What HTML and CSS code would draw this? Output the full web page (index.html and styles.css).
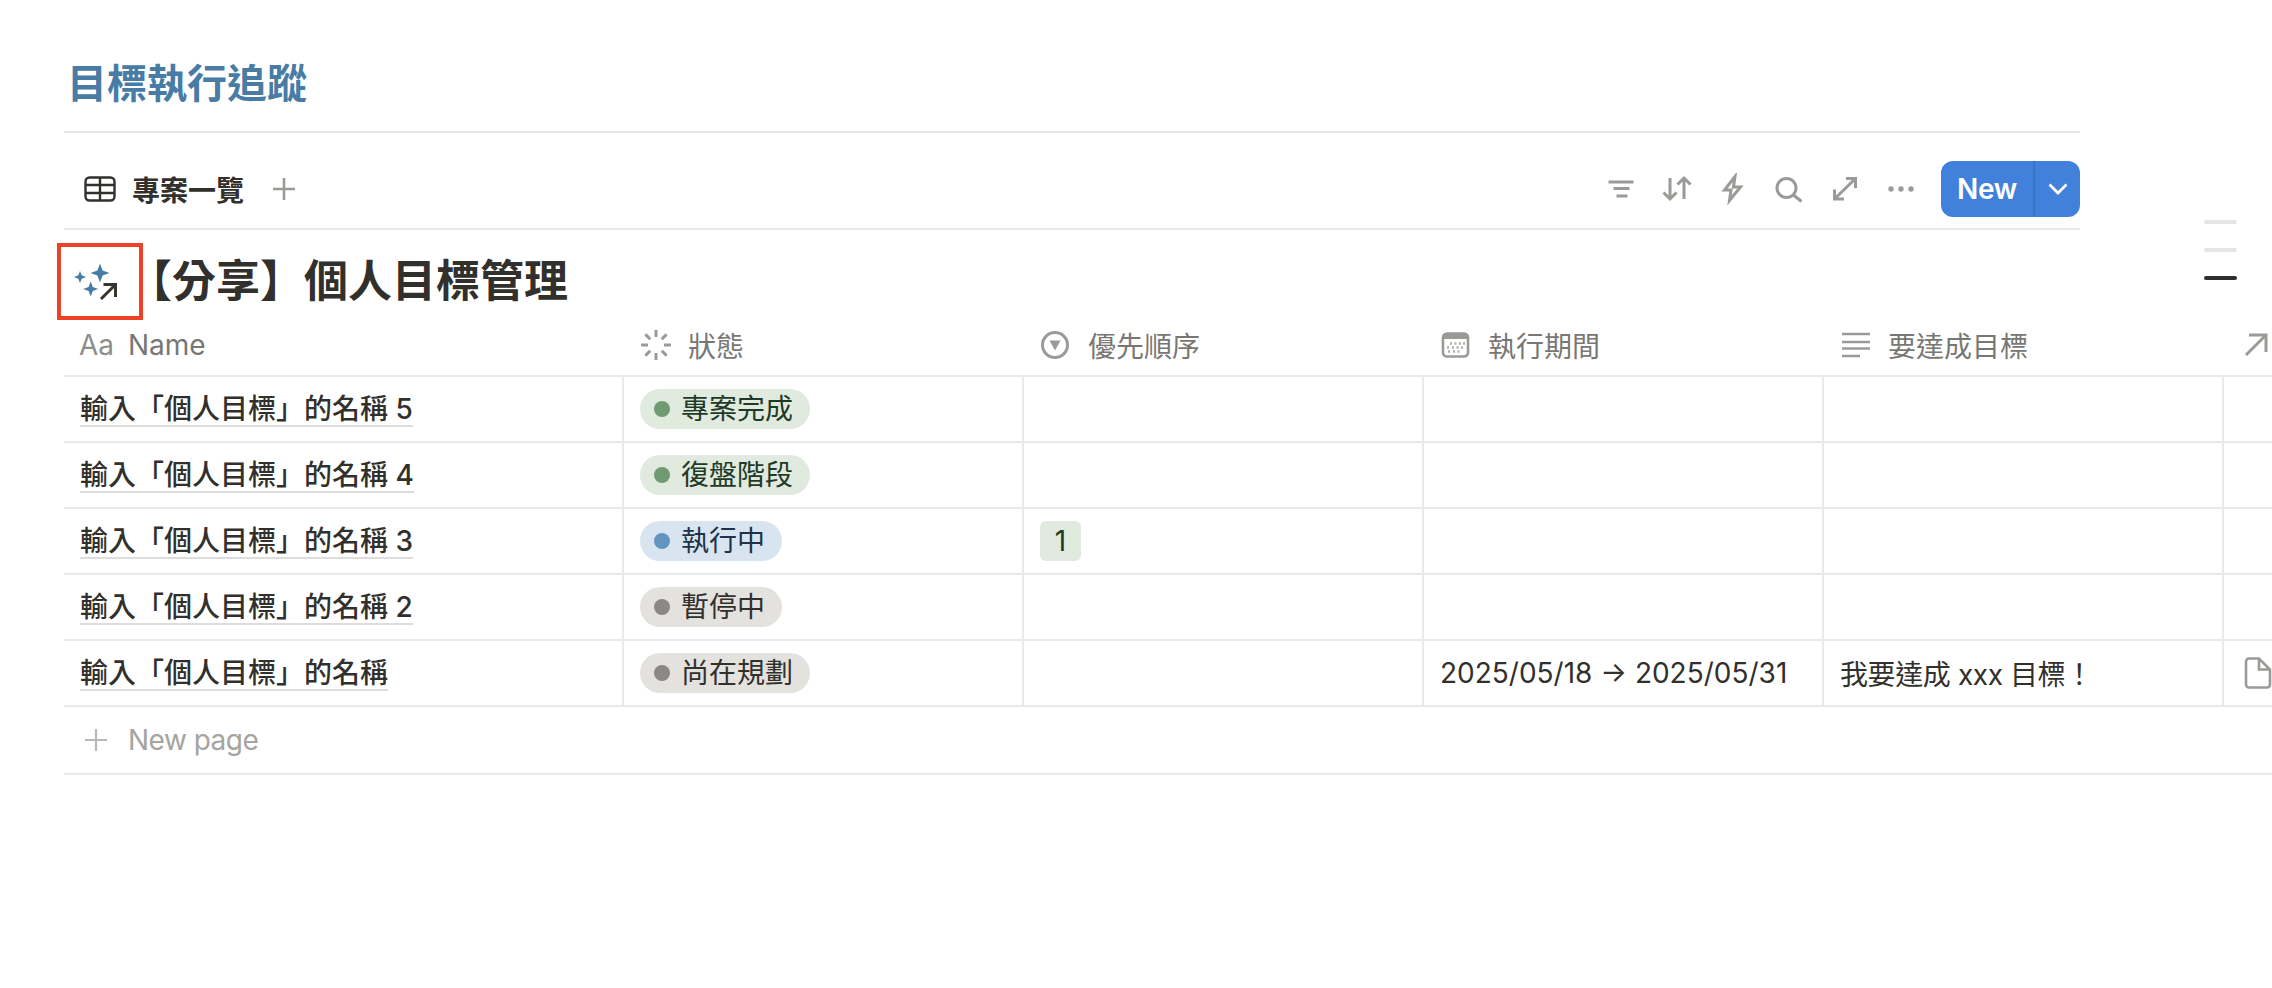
FILE: index.html
```html
<!DOCTYPE html>
<html lang="zh-Hant">
<head>
<meta charset="utf-8">
<title>目標執行追蹤</title>
<link rel="stylesheet" href="styles.css">
</head>
<body>
<main class="page">
  <div class="top">
    <h1 class="title">目標執行追蹤</h1>
    <div class="tabs">
      <div class="tab">
        <svg class="ico" viewBox="0 0 32 32"><rect x="1.5" y="4.5" width="29" height="23" rx="4" class="s-dark"/><path d="M1.5 12H30.5M1.5 20H30.5M16 4.5V27.5" class="s-dark"/></svg>
        <span class="tab-label">專案一覽</span>
        <svg class="ico add" viewBox="0 0 32 32"><path d="M16 5V27M5 16H27" class="s-gray"/></svg>
      </div>
      <div class="tools">
        <span class="tool"><svg class="ico" viewBox="0 0 32 32"><path d="M3.5 9H28.5M8.5 15.5H24.5M11.5 23H22.5" class="s-gray thick"/></svg></span>
        <span class="tool"><svg class="ico" viewBox="0 0 32 32"><path d="M9 5V26M2.5 19.5L9 26L15.5 19.5M23 5V26M16.5 11.5L23 5L29.5 11.5" class="s-gray thick"/></svg></span>
        <span class="tool"><svg class="ico" viewBox="0 0 32 32"><path d="M18 3.5L7.5 17H14L12.5 27.5L23.5 14H16.5Z" class="s-gray thick"/></svg></span>
        <span class="tool"><svg class="ico" viewBox="0 0 32 32"><circle cx="13.5" cy="15" r="9.5" class="s-gray thick"/><path d="M20.5 22L28.5 28.5" class="s-gray thick"/></svg></span>
        <span class="tool"><svg class="ico" viewBox="0 0 32 32"><path d="M6.5 25L25.5 6.5M17 5.5H26.5V15M5.5 16.5V26H15" class="s-gray thick"/></svg></span>
        <span class="tool"><svg class="ico" viewBox="0 0 32 32"><circle cx="6" cy="16" r="2.7" class="f-gray"/><circle cx="16" cy="16" r="2.7" class="f-gray"/><circle cx="26" cy="16" r="2.7" class="f-gray"/></svg></span>
        <div class="new-btn">
          <span class="new-label">New</span>
          <span class="new-caret"><svg class="caret" viewBox="0 0 20 12"><path d="M1.5 1.5L10 10L18.5 1.5"/></svg></span>
        </div>
      </div>
    </div>
  </div>

  <div class="heading">
    <svg class="spark" viewBox="64 251 64 64">
      <path class="star" d="M100 263.5L102.6 270.4L109.5 273L102.6 275.6L100 282.5L97.4 275.6L90.5 273L97.4 270.4Z"/>
      <path class="star" d="M80 271L81.7 275.3L86 277L81.7 278.7L80 283L78.3 278.7L74 277L78.3 275.3Z"/>
      <path class="star" d="M90.7 281.5L92.8 286.9L98.2 289L92.8 291.1L90.7 296.5L88.6 291.1L83.2 289L88.6 286.9Z"/>
      <path class="spark-arrow" d="M101 299L115.5 284.5M103.5 284.5H115.5V297"/>
    </svg>
    <h2 class="heading-text">【分享】個人目標管理</h2>
    <span class="highlight"></span>
  </div>

  <div class="table">
    <div class="row head">
      <div class="cell"><span class="aa">Aa</span><span>Name</span></div>
      <div class="cell">
        <svg class="ico" viewBox="0 0 32 32"><path d="M16 1V8M16 24V31M1 16H8M24 16H31M5.4 5.4L10.3 10.3M21.7 21.7L26.6 26.6M26.6 5.4L21.7 10.3M10.3 21.7L5.4 26.6" class="s-gray thick"/></svg>
        <span>狀態</span>
      </div>
      <div class="cell">
        <svg class="ico" viewBox="0 0 32 32"><circle cx="15" cy="16" r="12.5" class="s-gray thick"/><path d="M9.5 11.5H20.5L15 21.5Z" class="f-gray"/></svg>
        <span>優先順序</span>
      </div>
      <div class="cell">
        <svg class="ico" viewBox="0 0 32 32"><rect x="3" y="4.5" width="25" height="23" rx="4" class="s-gray"/><path d="M3 8.5a4 4 0 0 1 4-4H24a4 4 0 0 1 4 4V10H3Z" class="f-gray"/><path d="M10 14.5H12M14.5 14.5H16.5M19 14.5H21M23 14.5H25M7 18.5H9M12 18.5H14M16.5 18.5H18.5M21 18.5H23M8 22.5H10M13 22.5H15M17.5 22.5H19.5" class="s-dots"/></svg>
        <span>執行期間</span>
      </div>
      <div class="cell">
        <svg class="ico" viewBox="0 0 32 32"><path d="M2 5H30M2 13H30M2 19.5H30M2 27H20" class="s-gray"/></svg>
        <span>要達成目標</span>
      </div>
      <div class="cell">
        <svg class="ico" viewBox="0 0 32 32"><path d="M6 26L26 6M9 6H26V23" class="s-gray thick"/></svg>
      </div>
    </div>

    <div class="row">
      <div class="cell"><span class="name">輸入「個人目標」的名稱 5</span></div>
      <div class="cell"><span class="pill green"><i class="dot"></i>專案完成</span></div>
      <div class="cell"></div><div class="cell"></div><div class="cell"></div><div class="cell"></div>
    </div>
    <div class="row">
      <div class="cell"><span class="name">輸入「個人目標」的名稱 4</span></div>
      <div class="cell"><span class="pill green"><i class="dot"></i>復盤階段</span></div>
      <div class="cell"></div><div class="cell"></div><div class="cell"></div><div class="cell"></div>
    </div>
    <div class="row">
      <div class="cell"><span class="name">輸入「個人目標」的名稱 3</span></div>
      <div class="cell"><span class="pill blue"><i class="dot"></i>執行中</span></div>
      <div class="cell"><span class="tag">1</span></div><div class="cell"></div><div class="cell"></div><div class="cell"></div>
    </div>
    <div class="row">
      <div class="cell"><span class="name">輸入「個人目標」的名稱 2</span></div>
      <div class="cell"><span class="pill gray"><i class="dot"></i>暫停中</span></div>
      <div class="cell"></div><div class="cell"></div><div class="cell"></div><div class="cell"></div>
    </div>
    <div class="row">
      <div class="cell"><span class="name">輸入「個人目標」的名稱</span></div>
      <div class="cell"><span class="pill gray"><i class="dot"></i>尚在規劃</span></div>
      <div class="cell"></div>
      <div class="cell">2025/05/18 → 2025/05/31</div>
      <div class="cell note">我要達成 xxx 目標！</div>
      <div class="cell"><svg class="ico" viewBox="0 0 32 32"><path d="M9 1.5H19L30 12.5V27.5A3 3 0 0 1 27 30.5H9A3 3 0 0 1 6 27.5V4.5A3 3 0 0 1 9 1.5ZM19 1.5V12.5H30" class="s-gray"/></svg></div>
    </div>

    <div class="new-page">
      <svg class="ico" viewBox="0 0 32 32"><path d="M16 5V27M5 16H27" class="s-light"/></svg>
      <span>New page</span>
    </div>
  </div>
</main>
<div class="marks"><i class="mark"></i><i class="mark"></i><i class="mark on"></i></div>
</body>
</html>
```

FILE: styles.css
```css
html, body {
  margin: 0;
  height: 100%;
  background: #fff;
  overflow: hidden;
}
body {
  position: relative;
  font-family: "Inter", "Noto Sans CJK TC", sans-serif;
  font-size: 28px;
  color: #32302c;
}
.page {
  padding-left: 64px;
}
.top {
  width: 2016px;
}
.title {
  margin: 0;
  height: 133px;
  box-sizing: border-box;
  padding: 56px 0 0 3px;
  font-size: 40px;
  line-height: 56px;
  font-weight: 700;
  color: #487ca5;
  border-bottom: 2px solid #e6e5e0;
}
.tabs {
  display: flex;
  justify-content: space-between;
  align-items: center;
  height: 97px;
  padding-top: 17px;
  box-sizing: border-box;
  border-bottom: 2px solid #e9e9e7;
}
.tab {
  display: flex;
  align-items: center;
  margin-left: 20px;
}
.tab-label {
  margin-left: 16px;
  font-weight: 600;
}
.add {
  margin-left: 24px;
}
.ico {
  width: 32px;
  height: 32px;
  flex: none;
  display: block;
}
.ico path, .ico rect, .ico circle {
  stroke-width: 2.6;
}
.ico .thick { stroke-width: 3; }
.s-dark { fill: none; stroke: #32302c; stroke-width: 2.4 !important; }
.s-gray { fill: none; stroke: #9a9a97; }
.s-light { fill: none; stroke: #b9b8b5; stroke-width: 2.2 !important; }
.s-dots { fill: none; stroke: #b0afac; }
.ico .f-gray { fill: #9a9a97; stroke: none; }
.tools {
  display: flex;
  align-items: center;
}
.tool {
  width: 56px;
  display: flex;
  justify-content: center;
}
.new-btn {
  display: flex;
  align-items: center;
  width: 139px;
  height: 56px;
  margin-left: 12px;
  border-radius: 12px;
  background: #4281db;
  color: #fff;
  font-weight: 600;
}
.new-label {
  width: 92px;
  text-align: center;
  line-height: 56px;
  border-right: 2px solid #3a72c4;
  letter-spacing: -0.3px;
}
.new-caret {
  flex: 1;
  display: flex;
  justify-content: center;
}
.caret {
  width: 20px;
  height: 12px;
  fill: none;
  stroke: #fff;
  stroke-width: 2.8;
}
.heading {
  position: relative;
  display: flex;
  align-items: flex-start;
  height: 81px;
  padding-top: 21px;
  box-sizing: border-box;
}
.spark {
  width: 64px;
  height: 64px;
  flex: none;
}
.star {
  fill: #477ca5;
}
.spark-arrow {
  fill: none;
  stroke: #37352f;
  stroke-width: 3;
}
.heading-text {
  margin: 0;
  font-size: 44px;
  line-height: 60px;
  font-weight: 700;
  color: #32302c;
}
.highlight {
  position: absolute;
  left: -7px;
  top: 13px;
  width: 86px;
  height: 77px;
  box-sizing: border-box;
  border: 4px solid #ee4126;
}
.table {
  width: 2208px;
}
.row {
  display: grid;
  grid-template-columns: 560px 400px 400px 400px 400px 48px;
  height: 66px;
  box-sizing: border-box;
  border-bottom: 2px solid #e9e9e7;
}
.cell {
  display: flex;
  align-items: center;
  gap: 16px;
  padding-left: 16px;
  box-sizing: border-box;
  border-right: 2px solid #e9e9e7;
  white-space: nowrap;
}
.cell:last-child {
  border-right: 0;
}
.head .cell {
  border-right: 0;
  color: #787774;
  padding-top: 4px;
}
.note {
  letter-spacing: -0.4px;
}
.aa {
  width: 32px;
  margin-left: -1px;
  margin-right: 1px;
  color: #8f8e8b;
}
.name {
  font-weight: 500;
  line-height: 32px;
  padding-top: 1px;
  border-bottom: 2px solid #dedddb;
}
.pill {
  display: inline-flex;
  align-items: center;
  height: 40px;
  padding: 0 17px 0 14px;
  border-radius: 20px;
  line-height: 40px;
}
.dot {
  width: 16px;
  height: 16px;
  margin-right: 11px;
  border-radius: 50%;
}
.green { background: #e0eadf; color: #1f3a26; }
.green .dot { background: #6f9b73; }
.blue { background: #d8e5f0; color: #1f3248; }
.blue .dot { background: #6394bf; }
.gray { background: #e3e2de; color: #32302c; }
.gray .dot { background: #8a8986; }
.tag {
  width: 41px;
  height: 40px;
  line-height: 40px;
  text-align: center;
  border-radius: 6px;
  background: #e0eadf;
  color: #1f3a26;
}
.new-page {
  display: flex;
  align-items: center;
  gap: 16px;
  height: 68px;
  padding-left: 16px;
  box-sizing: border-box;
  border-bottom: 2px solid #e9e9e7;
  color: #a5a4a0;
  letter-spacing: -0.5px;
}
.marks {
  position: absolute;
  left: 2204px;
  top: 220px;
  display: flex;
  flex-direction: column;
  gap: 24px;
}
.mark {
  width: 33px;
  height: 4px;
  border-radius: 2px;
  background: #e5e5e3;
}
.mark.on {
  background: #2f2f2d;
}
```
